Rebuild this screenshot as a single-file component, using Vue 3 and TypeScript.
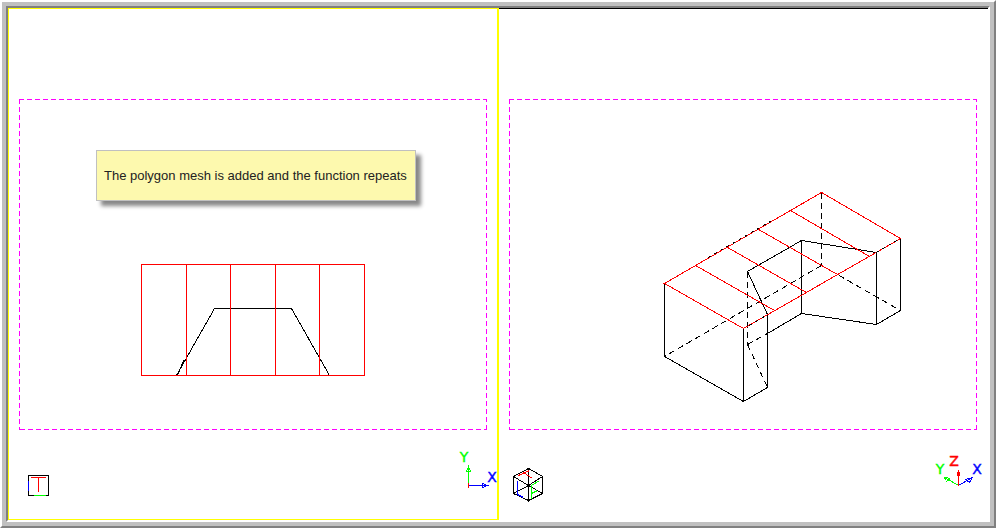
<script setup lang="ts">
interface Segment {
  x1: number
  y1: number
  x2: number
  y2: number
}

interface AxisLabel {
  text: string
  x: number
  y: number
  tone: string
}

const seg = (x1: number, y1: number, x2: number, y2: number): Segment => ({ x1, y1, x2, y2 })

const note = 'The polygon mesh is added and the function repeats'

// Front view
const meshColumns: number[] = [186, 230, 275, 319]
const frontLabels: AxisLabel[] = [
  { text: 'Y', x: 464, y: 462, tone: 'green' },
  { text: 'X', x: 492, y: 482, tone: 'blue' },
]

// Isometric view
const solidEdges: Segment[] = [
  seg(664, 283, 664, 356),
  seg(664, 356, 743, 401),
  seg(743, 328, 743, 401),
  seg(743, 401, 767, 387),
  seg(767, 314, 767, 387),
  seg(747, 271, 767, 314),
  seg(747, 271, 801, 240),
  seg(801, 240, 876, 252),
  seg(801, 240, 801, 313),
  seg(801, 313, 876, 324),
  seg(876, 252, 876, 324),
  seg(876, 324, 900, 310),
  seg(900, 238, 900, 310),
  seg(767, 333, 801, 313),
]
const hiddenEdges: Segment[] = [
  seg(821, 192, 821, 265),
  seg(821, 265, 664, 356),
  seg(821, 265, 900, 310),
  seg(747, 271, 747, 344),
  seg(747, 344, 767, 387),
  seg(747, 344, 767, 333),
]
const meshRows: Segment[] = [
  seg(695, 265, 774, 310),
  seg(727, 247, 806, 292),
  seg(758, 229, 837, 274),
  seg(790, 210, 869, 256),
]
const isoLabels: AxisLabel[] = [
  { text: 'Y', x: 940, y: 474, tone: 'green' },
  { text: 'Z', x: 954, y: 466, tone: 'red' },
  { text: 'X', x: 977, y: 474, tone: 'blue' },
]
</script>

<template>
  <main class="window">
    <div class="workspace">
      <section class="pane pane-active" aria-label="Front view">
        <svg class="drawing" viewBox="9 9 488 510">
          <g class="lines" transform="translate(.5 .5)">
            <g class="sheet">
              <path d="M18.5 99H486.5" />
              <path d="M18.5 429H486.5" stroke-dashoffset="7" />
              <path d="M19 98.5V429.5" />
              <path d="M486 98.5V429.5" stroke-dashoffset="2" />
            </g>

            <path class="black" d="M176 375L214 308H291L329 375M177 375L183 360" />
            <rect class="red" x="141" y="264" width="223" height="111" />
            <path v-for="x in meshColumns" :key="x" class="red" :d="`M${x} 264V375`" />

            <rect class="black" x="28" y="475" width="20" height="20" />
            <path class="green" d="M33 495H45" />
            <path class="blue" d="M28 480V490" />
            <path class="red" d="M30.5 477H45.5M38 477V491.5" />

            <path class="green" d="M468 484V465M466 471L468 466L470 471Z" />
            <path class="blue" d="M468 485H488M482 483L487 485L482 487Z" />
            <path class="red" d="M468 482.5V487" />
          </g>
          <text
            v-for="label in frontLabels"
            :key="label.text"
            class="axis-label"
            :class="label.tone"
            :x="label.x"
            :y="label.y"
          >{{ label.text }}</text>
        </svg>
        <p class="note">{{ note }}</p>
      </section>

      <section class="pane pane-idle" aria-label="Isometric view">
        <svg class="drawing" viewBox="499 9 489 511">
          <g class="lines" transform="translate(.5 .5)">
            <g class="sheet">
              <path d="M508.5 99H976.5" />
              <path d="M508.5 429H976.5" stroke-dashoffset="7" />
              <path d="M509 98.5V429.5" />
              <path d="M976 98.5V429.5" stroke-dashoffset="2" />
            </g>

            <line v-for="(s, i) in hiddenEdges" :key="`h${i}`" class="black hidden-edge" v-bind="s" />
            <line v-for="(s, i) in solidEdges" :key="`s${i}`" class="black" v-bind="s" />
            <line v-for="(s, i) in meshRows" :key="`m${i}`" class="red" v-bind="s" />
            <path class="red" d="M664 283L821 192L900 238L743 328Z" />
            <path class="black overlap" d="M708 257L775 218M876 252L900 238M749 325L767 314" />

            <path class="black" d="M528 468L542 476V493L528 500L513 493V476ZM528 467V501M513 476L528 485L542 476M513 493L528 485L542 493" />
            <path class="red" d="M518 475L529 470M523 472L532 478" />
            <path class="blue" d="M517 480V494L523 497" />
            <path class="green" d="M531 498V485L539 480M531 493L537 490" />

            <path class="green" d="M958 485L944 477M945 480L944 477L950 478M946 481L950 478" />
            <path class="blue" d="M958 485L972 477M965 479L972 477L969 482Z" />
            <path class="red" d="M958 485V469M957 475V472H959V475" />
          </g>
          <text
            v-for="label in isoLabels"
            :key="label.text"
            class="axis-label"
            :class="label.tone"
            :x="label.x"
            :y="label.y"
          >{{ label.text }}</text>
        </svg>
      </section>
    </div>
  </main>
</template>

<style>
body {
  margin: 0;
  background: #fff;
}
</style>

<style scoped>
.window {
  box-sizing: border-box;
  border: 2px solid;
  border-color: #fff #808080 #808080 #fff;
  background: #c0c0c0;
  padding: 4px;
}

.workspace {
  display: grid;
  grid-template-columns: 491fr 489fr;
  border: 2px solid;
  border-color: #808080 #fff #fff #808080;
  background: #fff;
}

.pane {
  position: relative;
  min-width: 0;
}

.pane-active {
  border: 1px solid #ff0;
  border-right-width: 2px;
}

.pane-idle {
  border-top: 1px solid #000;
}

.drawing {
  display: block;
  width: 100%;
  height: auto;
}

.lines {
  fill: none;
  stroke-width: 1px;
  shape-rendering: crispEdges;
}

.sheet {
  stroke: #f0f;
  stroke-dasharray: 5 3;
}

.lines .black {
  stroke: #000;
}

.lines .red {
  stroke: #f00;
}

.lines .green {
  stroke: #0f0;
}

.lines .blue {
  stroke: #00f;
}

.lines .hidden-edge {
  stroke-dasharray: 6 4;
}

.lines .overlap {
  stroke-dasharray: 3 4;
}

.axis-label {
  font-family: "DejaVu Sans", sans-serif;
  font-size: 14px;
  text-anchor: middle;
  paint-order: stroke;
}

.axis-label.red {
  fill: #f00;
  stroke: #f00;
  stroke-width: 0.4;
}

.axis-label.green {
  fill: #0f0;
  stroke: #0f0;
  stroke-width: 0.4;
}

.axis-label.blue {
  fill: #00f;
  stroke: #00f;
  stroke-width: 0.4;
}

.note {
  position: absolute;
  top: 141px;
  left: 87px;
  margin: 0;
  padding: 16px 8px 16px 7px;
  border: 1px solid #c0c0c0;
  background: #fdf9ae;
  box-shadow: 5px 5px 4px #888;
  color: #222;
  font-family: "Liberation Sans", Arial, sans-serif;
  font-size: 13px;
  line-height: 17px;
  white-space: nowrap;
}
</style>
